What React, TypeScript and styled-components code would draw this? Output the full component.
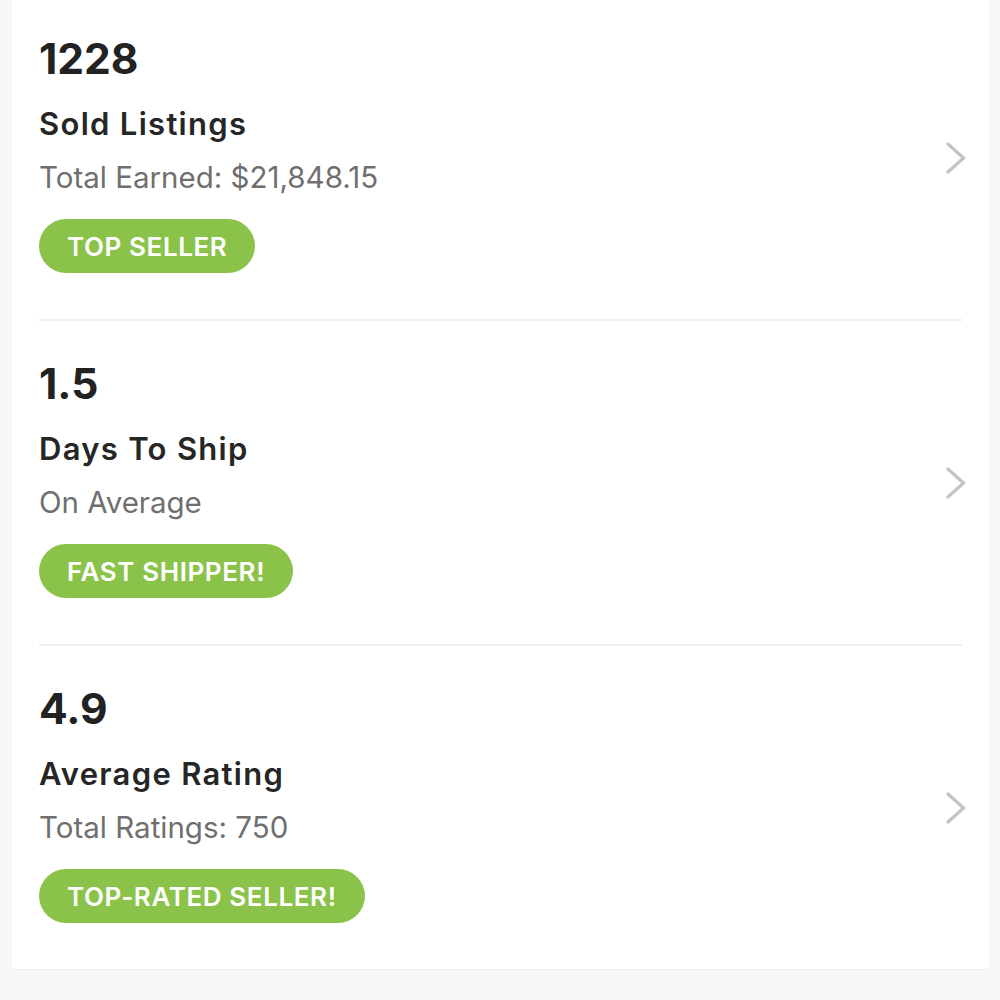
import React from "react";
import styled, { createGlobalStyle } from "styled-components";

const Global = createGlobalStyle`
  html, body { margin: 0; padding: 0; background: #f8f8f8; }
  body { font-family: "Inter", "Open Sans", sans-serif; -webkit-font-smoothing: antialiased; }
`;

const Page = styled.div`
  width: 1000px;
  height: 1000px;
  overflow: hidden;
  padding: 0 11px 0 12px;
  box-sizing: border-box;
  background: #f8f8f8;
`;

const Card = styled.div`
  background: #ffffff;
  padding: 0 27px;
  margin-top: -4px;
  border-bottom: 1px solid #f1f1ee;
`;

const Row = styled.div<{ $last?: boolean }>`
  display: flex;
  align-items: flex-start;
  height: 323px;
  border-bottom: ${(p) => (p.$last ? "none" : "2px solid #eeeeee")};
  box-sizing: content-box;
`;

const Info = styled.div`
  flex: 1;
  display: flex;
  flex-direction: column;
  align-items: flex-start;
  padding-top: 38px;
`;

const Value = styled.div`
  font-size: 42.5px;
  font-weight: 700;
  color: #222222;
  line-height: 50px;
`;

const Title = styled.div`
  margin-top: 22px;
  font-size: 31px;
  font-weight: 600;
  color: #262626;
  line-height: 36px;
  letter-spacing: 1.3px;
`;

const Sub = styled.div`
  margin-top: 17px;
  font-size: 29.5px;
  font-weight: 400;
  color: #6f6f6f;
  line-height: 36px;
`;

const Badge = styled.div`
  margin-top: 24px;
  height: 54px;
  padding: 0 28px;
  border-radius: 27px;
  background: #8bc34a;
  color: #ffffff;
  font-size: 26px;
  font-weight: 600;
  letter-spacing: 0.6px;
  display: flex;
  align-items: center;
`;

const Chevron = styled.svg`
  align-self: center;
  width: 22px;
  height: 32px;
  margin-right: -5px;
  flex: none;
`;

const items = [
  { value: "1228", title: "Sold Listings", sub: "Total Earned: $21,848.15", badge: "TOP SELLER" },
  { value: "1.5", title: "Days To Ship", sub: "On Average", badge: "FAST SHIPPER!" },
  { value: "4.9", title: "Average Rating", sub: "Total Ratings: 750", badge: "TOP-RATED SELLER!" },
];

export default function App() {
  return (
    <>
      <Global />
      <Page>
        <Card>
          {items.map((it, i) => (
            <Row key={it.value} $last={i === items.length - 1}>
              <Info>
                <Value>{it.value}</Value>
                <Title>{it.title}</Title>
                <Sub>{it.sub}</Sub>
                <Badge>{it.badge}</Badge>
              </Info>
              <Chevron viewBox="0 0 22 32" fill="none">
                <path d="M3 2 L18.5 16 L3 30" stroke="#c4c4c4" strokeWidth="3.3" strokeLinecap="round" strokeLinejoin="miter" />
              </Chevron>
            </Row>
          ))}
        </Card>
      </Page>
    </>
  );
}
